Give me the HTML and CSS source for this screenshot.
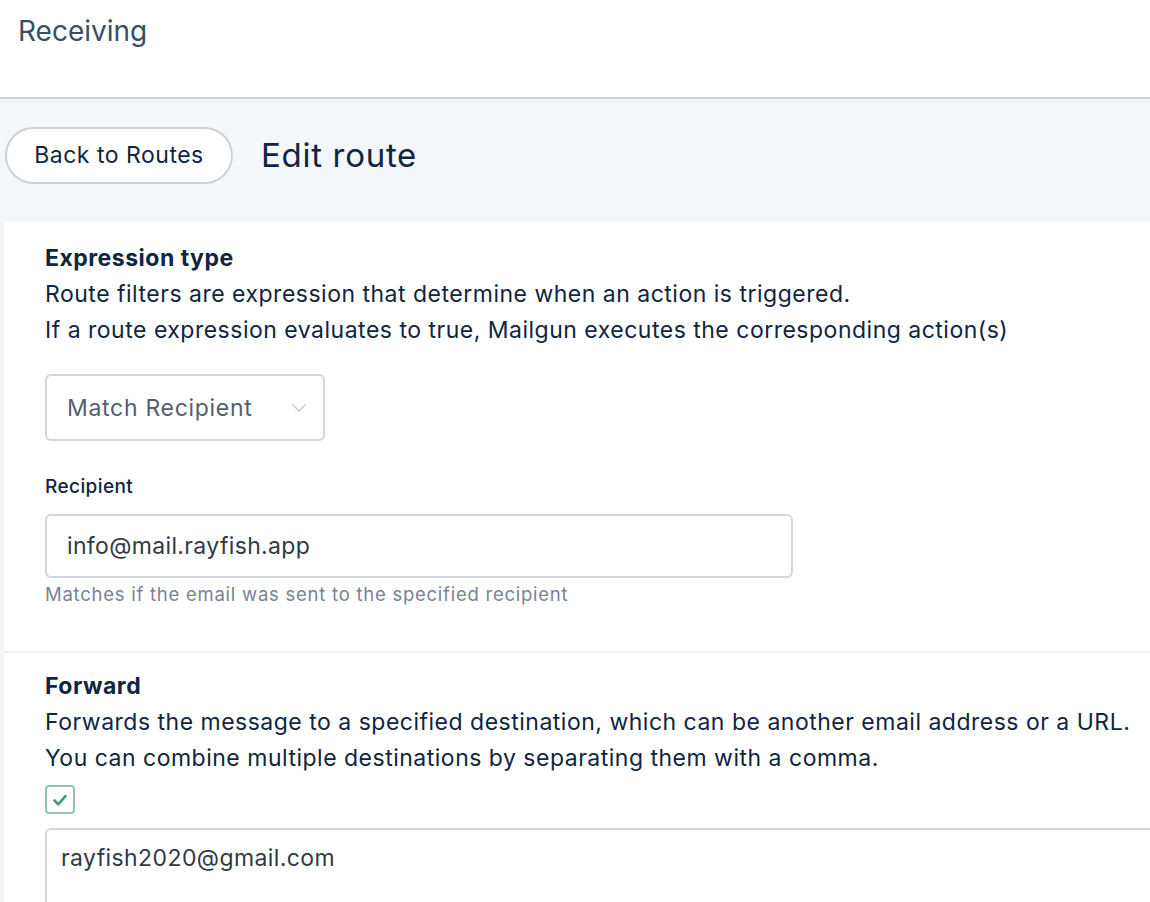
FILE: index.html
```html
<!DOCTYPE html>
<html lang="en">
<head>
<meta charset="utf-8">
<title>Edit route</title>
<link rel="stylesheet" href="styles.css">
</head>
<body>
<header class="page-header">
  <h1 class="page-title">Receiving</h1>
</header>
<main class="main">
  <div class="toolbar">
    <button class="back-btn" type="button">Back to Routes</button>
    <h2 class="toolbar-title">Edit route</h2>
  </div>
  <div class="card">
    <section class="section">
      <h3 class="section-title">Expression type</h3>
      <p class="section-desc">Route filters are expression that determine when an action is triggered.<br>If a route expression evaluates to true, Mailgun executes the corresponding action(s)</p>
      <div class="select">
        <span class="select-value">Match Recipient</span>
        <svg class="chevron" width="14" height="8" viewBox="0 0 14 8"><path d="M1 1l6 6 6-6" fill="none" stroke="#c3c8cf" stroke-width="1.4" stroke-linecap="round" stroke-linejoin="round"/></svg>
      </div>
      <label class="field-label">Recipient</label>
      <div class="input">info@mail.rayfish.app</div>
      <p class="field-help">Matches if the email was sent to the specified recipient</p>
    </section>
    <section class="section section-forward">
      <h3 class="section-title">Forward</h3>
      <p class="section-desc">Forwards the message to a specified destination, which can be another email address or a URL.<br>You can combine multiple destinations by separating them with a comma.</p>
      <div class="checkbox">
        <svg width="16" height="14" viewBox="0 0 16 14"><path d="M2.5 7.5l3.8 3.8L13.5 3" fill="none" stroke="#3e9a70" stroke-width="2.6" stroke-linecap="round" stroke-linejoin="round"/></svg>
      </div>
      <div class="textarea">rayfish2020@gmail.com</div>
    </section>
  </div>
</main>
</body>
</html>
```

FILE: styles.css
```css
* { box-sizing: border-box; }
html, body { margin: 0; padding: 0; }
body {
  font-family: Inter, "Noto Sans", sans-serif;
  font-optical-sizing: none;
  color: #0f2542;
  background: #f4f7fa;
  overflow: hidden;
  width: 1150px;
  height: 902px;
}
.page-header {
  background: #ffffff;
  height: 99px;
  border-bottom: 2px solid #cfd0d2;
  padding: 14px 0 0 18px;
}
.page-title {
  margin: 0;
  font-size: 28px;
  line-height: 34px;
  font-weight: 400;
  color: #3b4e66;
}
.main {
  padding-left: 4px;
}
.toolbar {
  height: 123px;
  display: flex;
  align-items: center;
  gap: 28px;
  padding: 0 0 11px 1px;
}
.back-btn {
  width: 228px;
  height: 57px;
  border-radius: 29px;
  border: 2px solid #d0d1d3;
  background: #ffffff;
  font-family: inherit;
  font-optical-sizing: none;
  font-size: 23px;
  letter-spacing: 0.5px;
  color: #0f2542;
  padding: 0;
}
.toolbar-title {
  margin: 0;
  font-size: 33px;
  letter-spacing: 0.7px;
  font-weight: 400;
  color: #0f2542;
}
.card {
  background: #ffffff;
  width: 1200px;
}
.section {
  padding: 18px 0 45px 41px;
}
.section-forward {
  border-top: 2px solid #eef0f2;
  padding-top: 15px;
  padding-bottom: 0;
}
.section-title {
  margin: 0;
  font-size: 23px;
  letter-spacing: 0.5px;
  line-height: 36px;
  font-weight: 700;
  color: #0f2542;
}
.section-desc {
  margin: 0;
  font-size: 23px;
  letter-spacing: 0.5px;
  line-height: 36px;
  color: #0f2542;
}
.select {
  margin-top: 26px;
  width: 280px;
  height: 67px;
  border: 2px solid #d3d7dc;
  border-radius: 6px;
  display: flex;
  align-items: center;
  justify-content: space-between;
  padding: 0 17px 0 20px;
}
.select-value {
  font-size: 23px;
  letter-spacing: 0.7px;
  color: #545f6d;
}
.chevron { display: block; }
.field-label {
  display: block;
  margin-top: 34px;
  font-size: 19px;
  letter-spacing: 0.4px;
  line-height: 24px;
  font-weight: 500;
  color: #0f2542;
}
.input {
  margin-top: 15px;
  width: 748px;
  height: 64px;
  border: 2px solid #d3d7dc;
  border-radius: 6px;
  display: flex;
  align-items: center;
  padding-left: 20px;
  font-size: 23px;
  letter-spacing: 0.35px;
  color: #2f3a47;
}
.field-help {
  margin: 4px 0 0;
  font-size: 18.5px;
  letter-spacing: 0.75px;
  line-height: 24px;
  color: #7a838f;
}
.checkbox {
  margin-top: 9px;
  width: 30px;
  height: 29px;
  border: 2px solid #8fc6ad;
  border-radius: 4px;
  display: flex;
  align-items: center;
  justify-content: center;
}
.textarea {
  margin-top: 14px;
  width: 1150px;
  height: 120px;
  border: 2px solid #d3d7dc;
  border-radius: 6px;
  padding: 14px 0 0 14px;
  font-size: 23px;
  letter-spacing: 0.4px;
  line-height: 28px;
  color: #2f3a47;
}
```
